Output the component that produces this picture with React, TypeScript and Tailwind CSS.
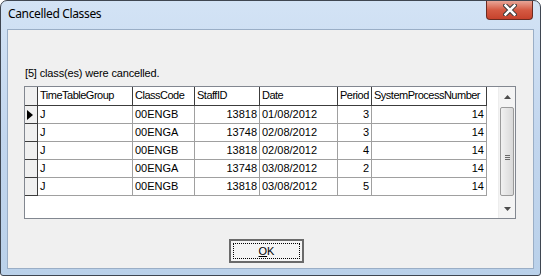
import React from 'react';

type Col = { key: string; label: string; w: string; right?: boolean };

const cols: Col[] = [
  { key: 'group', label: 'TimeTableGroup', w: 'w-[95px]' },
  { key: 'code', label: 'ClassCode', w: 'w-[62px]' },
  { key: 'staff', label: 'StaffID', w: 'w-[65px]', right: true },
  { key: 'date', label: 'Date', w: 'w-[78px]' },
  { key: 'period', label: 'Period', w: 'w-[34px]', right: true },
  { key: 'spn', label: 'SystemProcessNumber', w: 'w-[115px]', right: true },
];

const rows: Record<string, string>[] = [
  { group: 'J', code: '00ENGB', staff: '13818', date: '01/08/2012', period: '3', spn: '14' },
  { group: 'J', code: '00ENGA', staff: '13748', date: '02/08/2012', period: '3', spn: '14' },
  { group: 'J', code: '00ENGB', staff: '13818', date: '02/08/2012', period: '4', spn: '14' },
  { group: 'J', code: '00ENGA', staff: '13748', date: '03/08/2012', period: '2', spn: '14' },
  { group: 'J', code: '00ENGB', staff: '13818', date: '03/08/2012', period: '5', spn: '14' },
];

function ScrollBar() {
  return (
    <div className="w-[17px] flex flex-col bg-[#f4f4f4] border-l border-[#ededed]">
      <div className="h-[19px] flex items-center justify-center">
        <svg width="7" height="4" viewBox="0 0 7 4"><polygon points="3.5,0 7,4 0,4" fill="#4d4d4d" /></svg>
      </div>
      <div className="flex-1 px-[1px] py-[1px]">
        <div className="h-[89px] rounded-[2px] border border-[#9a9a9a] bg-gradient-to-r from-[#f1f1f1] to-[#d9d9d9] flex items-center justify-center">
          <div className="mt-[12px] flex flex-col gap-[1px]">
            <div className="w-[5px] h-[1px] bg-[#6a6a6a]" />
            <div className="w-[5px] h-[1px] bg-[#6a6a6a]" />
            <div className="w-[5px] h-[1px] bg-[#6a6a6a]" />
          </div>
        </div>
      </div>
      <div className="h-[19px] flex items-center justify-center">
        <svg width="7" height="4" viewBox="0 0 7 4"><polygon points="0,0 7,0 3.5,4" fill="#4d4d4d" /></svg>
      </div>
    </div>
  );
}

function Grid() {
  return (
    <div className="ml-[16px] mt-[6px] w-[492px] h-[133px] border border-[#828790] bg-white flex">
      <div className="flex-1">
        <div className="flex h-[19px]">
          <div className="w-[13px] bg-[#f0f0f0] border-r border-b border-[#3c3c3c]" />
          {cols.map((c) => (
            <div
              key={c.key}
              className={`${c.w} bg-white border-r border-b border-[#3c3c3c] pl-[2px] leading-[17px] whitespace-nowrap overflow-hidden tracking-[-0.5px]`}
            >
              {c.label}
            </div>
          ))}
        </div>
        {rows.map((r, i) => (
          <div key={i} className="flex h-[18px]">
            <div className="w-[13px] bg-[#f0f0f0] border-r border-b border-[#3c3c3c] flex items-center pl-[2px]">
              {i === 0 && (
                <svg width="6" height="10" viewBox="0 0 6 10"><polygon points="0,0 6,5 0,10" fill="#000" /></svg>
              )}
            </div>
            {cols.map((c) => (
              <div
                key={c.key}
                className={`${c.w} border-r border-b border-[#a0a0a0] px-[2px] leading-[17px] whitespace-nowrap ${c.right ? 'text-right' : ''}`}
              >
                {r[c.key]}
              </div>
            ))}
          </div>
        ))}
      </div>
      <ScrollBar />
    </div>
  );
}

export default function App() {
  return (
    <div className="w-[541px] h-[276px] bg-white">
      <div
        className="relative w-[541px] h-[276px] rounded-t-[7px] rounded-b-[3px] border border-[#3f4651] bg-gradient-to-b from-[#d3e3f5] via-[#c2d6ee] to-[#bad1ea] flex flex-col"
        style={{ fontFamily: '"Liberation Sans", Arial, sans-serif' }}
      >
        <div className="h-[28px] pl-[7px] flex items-center">
          <span
            className="text-[12px] text-black pb-[2px] tracking-[-0.35px]"
            style={{ fontFamily: '"Noto Sans", sans-serif' }}
          >
            Cancelled Classes
          </span>
        </div>

        <div className="absolute top-0 right-[7px] w-[47px] h-[19px] rounded-b-[4px] border border-t-0 border-[#6b2b21] bg-gradient-to-b from-[#e7a597] via-[#d45a43] to-[#c6422c] flex items-center justify-center">
          <svg width="14" height="12" viewBox="0 0 14 12">
            <path d="M2.5 1.5 L11.5 10.5 M11.5 1.5 L2.5 10.5" stroke="#3a3a3a" strokeWidth="4.5" strokeLinecap="square" />
            <path d="M2.5 1.5 L11.5 10.5 M11.5 1.5 L2.5 10.5" stroke="#ffffff" strokeWidth="2.5" strokeLinecap="square" />
          </svg>
        </div>

        <div className="mx-[6px] h-[240px] border border-[#9aaec6] bg-[#f0f0f0] text-[11px] text-black">
          <div className="mt-[37px] pl-[17px] leading-[13px] tracking-[-0.15px]">[5] class(es) were cancelled.</div>
          <Grid />
          <div className="mt-[20px] ml-[221px] w-[75px] h-[24px] border-[2px] border-[#6a6a6a] bg-[#f4f4f4] p-[2px]">
            <div className="w-full h-full border border-dotted border-black flex items-center justify-center">
              <span><span className="underline">O</span>K</span>
            </div>
          </div>
        </div>
      </div>
    </div>
  );
}
